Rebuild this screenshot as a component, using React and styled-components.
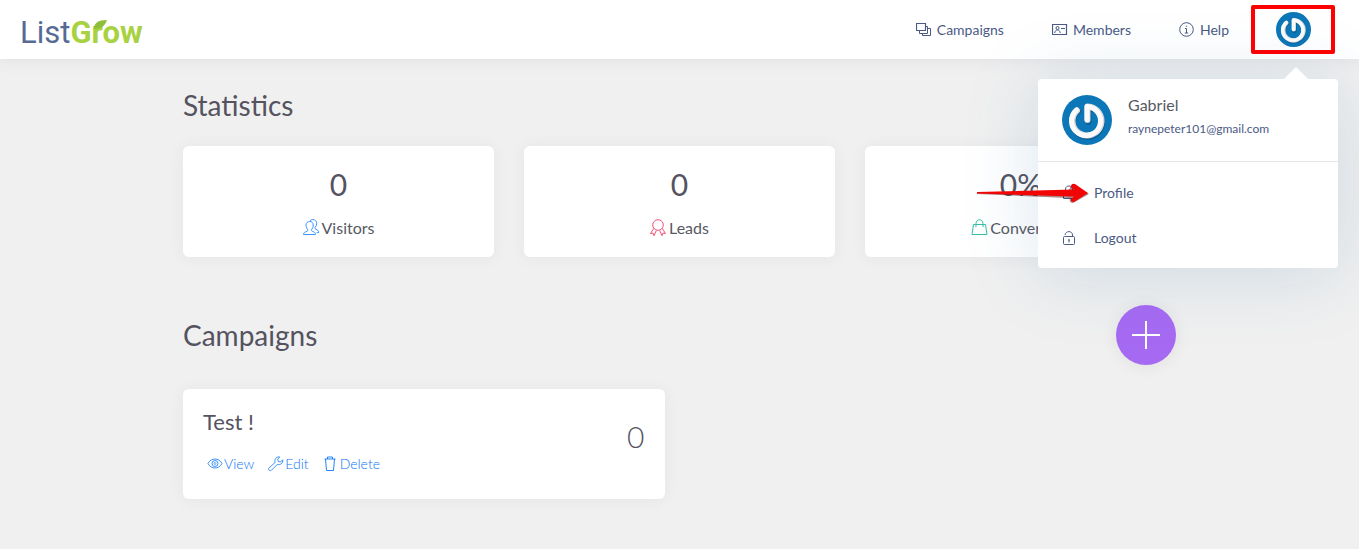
import React from "react"
import styled, { createGlobalStyle } from "styled-components"

const GlobalStyle = createGlobalStyle`
  * {
    box-sizing: border-box;
  }
  body {
    margin: 0;
    background-color: #f0f0f0;
    color: #575962;
    font-family: Lato, "Liberation Sans", sans-serif;
    font-size: 14px;
  }
  h1, h2, h3, p {
    margin: 0;
    font-weight: 400;
  }
  a {
    text-decoration: none;
  }
`

const Header = styled.header`
  position: relative;
  z-index: 1;
  height: 59px;
  display: flex;
  justify-content: space-between;
  align-items: center;
  padding: 0 24px 0 20px;
  background-color: white;
  box-shadow: 0 1px 15px 1px rgba(69, 65, 98, 0.08);
`

const Logo = styled.a`
  position: relative;
  display: flex;
  padding-top: 6px;
  font-family: Roboto, sans-serif;
  font-size: 31px;
  line-height: 36px;
  color: #566a94;

  strong {
    color: #a9d243;
    font-weight: 700;
  }
  svg {
    position: absolute;
    left: 73px;
    top: 11px;
  }
`

const Nav = styled.nav`
  display: flex;
  align-items: center;
`

const NavLink = styled.a`
  display: flex;
  align-items: center;
  gap: 5px;
  margin-right: 48px;
  font-size: 14px;
  line-height: 20px;
  color: #4b5a85;
`

const UserArea = styled.div`
  position: relative;
  margin-left: -26px;
`

const AvatarBtn = styled.button`
  display: flex;
  justify-content: center;
  align-items: center;
  width: 84px;
  height: 49px;
  padding: 0;
  background: none;
  border: 4px solid #ff0000;
  border-radius: 2px;
`

const Menu = styled.div`
  position: absolute;
  top: 74px;
  right: -3px;
  width: 300px;
  background-color: white;
  border-radius: 4px;
  box-shadow: 0 5px 75px rgba(50, 110, 160, 0.18);
`

const Caret = styled.svg`
  position: absolute;
  top: -12px;
  right: 30px;
`

const MenuHead = styled.div`
  display: flex;
  gap: 16px;
  padding: 16px 24px;
  border-bottom: 1px solid #e4e6ea;
`

const UserName = styled.p`
  font-size: 16px;
  line-height: 20px;
  color: #575962;
`

const UserEmail = styled.a`
  display: block;
  font-size: 12px;
  line-height: 28px;
  color: #4b5a85;
`

const MenuList = styled.div`
  padding: 8px 0;
`

const MenuItem = styled.a`
  display: flex;
  align-items: center;
  gap: 18px;
  height: 45px;
  padding: 0 24px;
  font-size: 14px;
  color: #4b5a85;
`

const Pointer = styled.svg`
  position: absolute;
  top: 104px;
  left: -62px;
`

const Main = styled.main`
  max-width: 993px;
  margin: 0 auto;
  padding: 30px 0;
`

const Title = styled.h2`
  font-size: 28px;
  line-height: 32px;
  color: #54535f;
`

const StatGrid = styled.section`
  display: grid;
  grid-template-columns: repeat(3, 1fr);
  gap: 30px;
  margin: 25px 0 48px;
`

const Card = styled.article`
  background-color: white;
  border-radius: 6px;
  box-shadow: 0 1px 15px 1px rgba(69, 65, 78, 0.05);
`

const StatCard = styled(Card)`
  display: flex;
  flex-direction: column;
  align-items: center;
  gap: 14px;
  padding: 20px 20px 17px;
`

const StatValue = styled.div`
  font-size: 30px;
  line-height: 36px;
  color: #54535f;
`

const StatLabel = styled.div`
  display: flex;
  align-items: center;
  gap: 2px;
  font-size: 16px;
  line-height: 24px;
  color: #575962;

  svg {
    color: ${props => props.$color};
  }
`

const TitleRow = styled.div`
  display: flex;
  justify-content: space-between;
  align-items: center;
  margin-bottom: 24px;
`

const AddBtn = styled.button`
  display: flex;
  justify-content: center;
  align-items: center;
  width: 60px;
  height: 60px;
  padding: 0;
  background-color: #a66af2;
  color: white;
  border: none;
  border-radius: 50%;
  box-shadow: 0 1px 15px 1px rgba(69, 65, 78, 0.08);
`

const CampaignGrid = styled.section`
  display: grid;
  grid-template-columns: repeat(2, 1fr);
  gap: 30px;
`

const CampaignCard = styled(Card)`
  display: flex;
  justify-content: space-between;
  padding: 20px 20px 24px;
`

const CampaignName = styled.h3`
  font-size: 22px;
  line-height: 26px;
  color: #54535f;
`

const Actions = styled.div`
  display: flex;
  gap: 14px;
  margin-top: 18px;
  padding-left: 4px;
`

const Action = styled.a`
  display: flex;
  align-items: center;
  gap: 1px;
  font-size: 14px;
  font-weight: 300;
  line-height: 22px;
  color: #0a76f8;
`

const Total = styled.div`
  padding-top: 10px;
  font-size: 30px;
  font-weight: 300;
  line-height: 34px;
  color: #54535f;
`

const Icon = ({ width = 16, height = 16, children }) => (
  <svg
    width={width}
    height={height}
    viewBox={`0 0 ${width} ${height}`}
    fill="none"
    stroke="currentColor"
    strokeWidth="1"
    aria-hidden="true"
  >
    {children}
  </svg>
)

const LayersIcon = () => (
  <Icon>
    <path d="M.5 1.500h9v7h-9z" strokeWidth="1.2" />
    <path d="M9.500 4.500h2v7h-8v-3M11.500 6.500h3v7h-8v-2" />
  </Icon>
)

const CardIcon = () => (
  <Icon>
    <path d="M.5 2.500h14v10H.5z" strokeWidth="1.2" />
    <circle cx="5.500" cy="6" r="1.500" />
    <path d="M2.700 11c.3-2 1.300-3 2.800-3s2.500 1 2.800 3M9 6.500h4" />
  </Icon>
)

const InfoIcon = () => (
  <Icon>
    <circle cx="7.500" cy="7.500" r="6.800" />
    <path d="M6 6.500h1.500V11M5.800 11h3.400M6.900 4.200h1.200" />
  </Icon>
)

const VisitorsIcon = () => (
  <Icon width={17} height={18}>
    <path d="M.5 15.500h12c0-2-1-2.400-3.300-3.200-.9-.4-.9-1.500-.3-2.300 1-1.200 1.400-2.500 1.300-4C10.100 3.600 8.800 2.500 6.700 2.500S3.100 3.700 3 6c0 1.500.4 2.800 1.400 4 .6.8.5 1.900-.4 2.300C1.600 13.200.5 13.500.5 15.500z" />
    <path d="M7 1.700C7.700 1 8.500.6 9.900.6c2.400 0 3.700 1.500 3.800 3.700 0 1.500-.4 2.700-1.300 3.800-.6.8-.5 1.700.3 2.100 2 .8 3 1.200 3 3.400h-2" />
  </Icon>
)

const LeadsIcon = () => (
  <Icon width={17} height={18}>
    <circle cx="8" cy="6" r="5.300" />
    <path d="M3.800 9.300.5 14.500l2.600-.4.900 2.600 2.300-5.200M12.200 9.300l3.300 5.200-2.600-.4-.9 2.600-2.300-5.200" />
  </Icon>
)

const BagIcon = () => (
  <Icon width={17} height={18}>
    <path d="M2.500 5.500h12l1.500 10H1z" />
    <path d="M5 8V4.500C5-.500 12-.500 12 4.500V8" />
  </Icon>
)

const LockIcon = () => (
  <Icon width={14} height={16}>
    <path d="M1.500 6.500h11v7h-11zM3.500 6.500V4c0-4 7-4 7 0v2.500M7 9v2.500" />
  </Icon>
)

const UnlockIcon = () => (
  <Icon width={14} height={16}>
    <rect x="1.500" y="6.500" width="11" height="8" rx="1" />
    <path d="M3 5C3.500.500 10.500.500 10.500 5v1.500M7 9.500v3M6 10h2" />
  </Icon>
)

const EyeIcon = () => (
  <Icon>
    <path d="M1 7.500c3-6 11-6 14 0-3 6-11 6-14 0z" strokeWidth="0.800" />
    <circle cx="8" cy="7.500" r="3" strokeWidth="0.800" />
    <circle cx="8" cy="7.500" r="1" strokeWidth="0.600" />
  </Icon>
)

const WrenchIcon = () => (
  <Icon>
    <path d="M1 12 7.100 6.500C6.200 3.500 8.400.4 11.700.9L9.700 3.300l.6 2.200 2.200.5 2.200-2.200c.6 3.300-2.400 5.500-5.500 4.700L3.500 14.200C1.800 15.600-.5 13.400 1 12z" strokeWidth="0.800" />
  </Icon>
)

const TrashIcon = () => (
  <Icon>
    <path d="M1.500 3h11M4.500 3V1h5v2M2.500 3l1 11.500h7l1-11.500" strokeWidth="0.900" />
  </Icon>
)

const PlusIcon = () => (
  <svg width="28" height="28" viewBox="0 0 28 28" stroke="white" strokeWidth="2" aria-hidden="true">
    <path d="M14 0v28M0 14h28" />
  </svg>
)

const Avatar = ({ size }) => (
  <svg width={size} height={size} viewBox="0 0 50 50" fill="none" aria-hidden="true">
    <circle cx="25" cy="25" r="25" fill="#0b77b8" />
    <g strokeLinecap="round" strokeLinejoin="round">
      <path d="M25.500 26V12A14.500 14.500 0 1 1 15 15.500" stroke="#0a5f96" strokeWidth="6" transform="translate(1 1)" />
      <path d="M25.500 25V11.500A14.500 14.500 0 1 1 15 15.500" stroke="#d6dadd" strokeWidth="6" />
      <path d="M25 24.500V11.500A14.500 14.500 0 1 1 14.500 15" stroke="#fbfbfb" strokeWidth="5" />
    </g>
  </svg>
)

const stats = [
  { value: "0", label: "Visitors", color: "#3d94ff", icon: VisitorsIcon },
  { value: "0", label: "Leads", color: "#f8517c", icon: LeadsIcon },
  { value: "0%", label: "Conversion", color: "#34bfa3", icon: BagIcon },
]

const UserMenu = () => (
  <Menu>
    <Caret width="24" height="12" viewBox="0 0 24 12" aria-hidden="true">
      <path d="M0 12 12 0l12 12z" fill="white" />
    </Caret>
    <MenuHead>
      <Avatar size={50} />
      <div>
        <UserName>Gabriel</UserName>
        <UserEmail href="#email">raynepeter101@gmail.com</UserEmail>
      </div>
    </MenuHead>
    <MenuList>
      <MenuItem href="#profile">
        <LockIcon />
        Profile
      </MenuItem>
      <MenuItem href="#logout">
        <UnlockIcon />
        Logout
      </MenuItem>
    </MenuList>
    <Pointer width="114" height="22" viewBox="0 0 114 22" aria-hidden="true">
      <path d="M1 10 92 8 94 5Q94 2 98 2L113 11 97 20Q93 20 94 15L91 15 1 11z" fill="#5b1010" opacity="0.500" />
      <path d="M1 9 98 6.500 95 4Q95 0 99 1L112 10 98 19Q94 19 95 16L98 13.500 1 10.500z" fill="#f20505" />
    </Pointer>
  </Menu>
)

const App = () => {
  return (
    <>
      <GlobalStyle />
      <Header>
        <Logo href="#home">
          <span>List</span>
          <strong>Grow</strong>
          <svg width="16" height="10" viewBox="0 0 16 10" aria-hidden="true">
            <path d="M1 9C1 3 5 0 14 0 12 6 8 9 1 9z" fill="#8fbf3a" />
          </svg>
        </Logo>
        <Nav>
          <NavLink href="#campaigns">
            <LayersIcon />
            Campaigns
          </NavLink>
          <NavLink href="#members">
            <CardIcon />
            Members
          </NavLink>
          <NavLink href="#help">
            <InfoIcon />
            Help
          </NavLink>
          <UserArea>
            <AvatarBtn aria-label="Account">
              <Avatar size={35} />
            </AvatarBtn>
            <UserMenu />
          </UserArea>
        </Nav>
      </Header>
      <Main>
        <Title>Statistics</Title>
        <StatGrid>
          {stats.map(({ value, label, color, icon: StatIcon }) => (
            <StatCard key={label}>
              <StatValue>{value}</StatValue>
              <StatLabel $color={color}>
                <StatIcon />
                {label}
              </StatLabel>
            </StatCard>
          ))}
        </StatGrid>
        <TitleRow>
          <Title>Campaigns</Title>
          <AddBtn aria-label="New campaign">
            <PlusIcon />
          </AddBtn>
        </TitleRow>
        <CampaignGrid>
          <CampaignCard>
            <div>
              <CampaignName>Test !</CampaignName>
              <Actions>
                <Action href="#view">
                  <EyeIcon />
                  View
                </Action>
                <Action href="#edit">
                  <WrenchIcon />
                  Edit
                </Action>
                <Action href="#delete">
                  <TrashIcon />
                  Delete
                </Action>
              </Actions>
            </div>
            <Total>0</Total>
          </CampaignCard>
        </CampaignGrid>
      </Main>
    </>
  )
}

export default App
